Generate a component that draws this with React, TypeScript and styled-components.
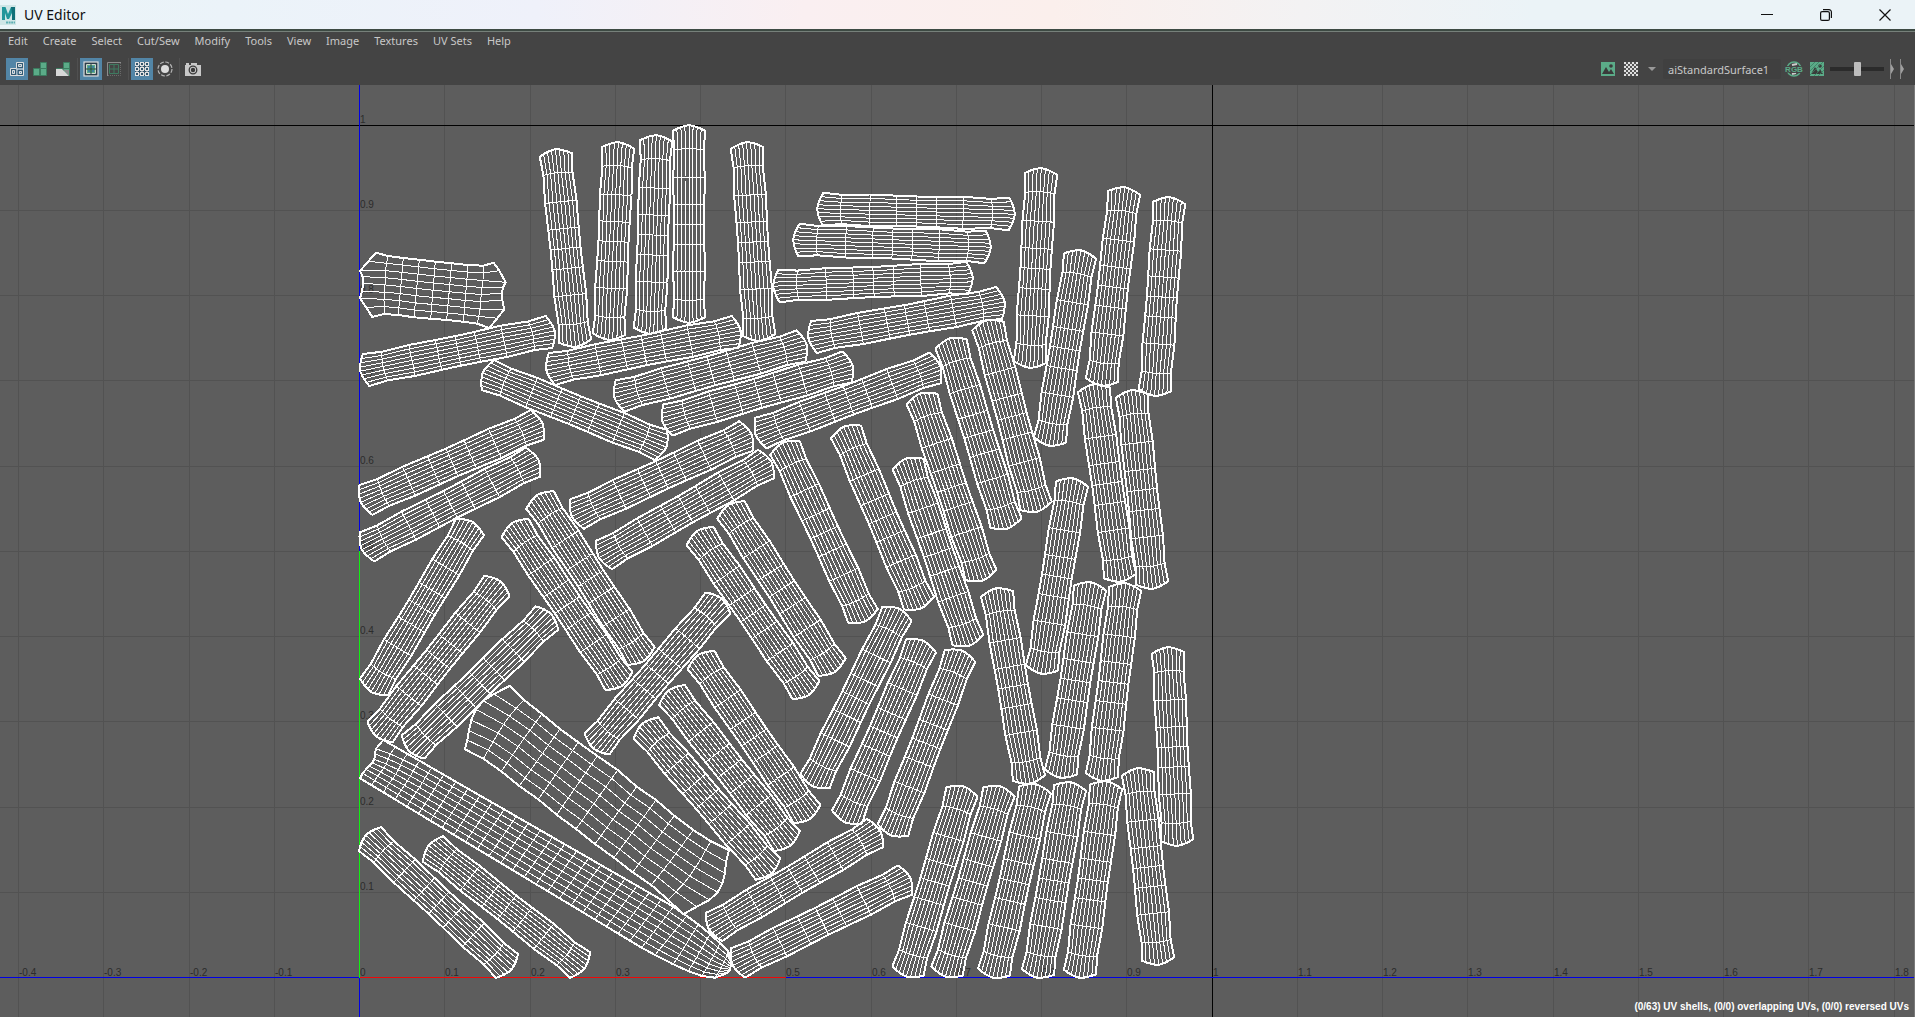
import React from "react";
import styled, { createGlobalStyle } from "styled-components";

type Pt = [number, number];

const GlobalStyle = createGlobalStyle`
  * { box-sizing: border-box; }
  body { margin: 0; background: #5d5d5d; overflow: hidden; }
  button, input { font: inherit; color: inherit; margin: 0; padding: 0; border: 0; background: none; }
`;

const Window = styled.div`
  display: flex;
  flex-direction: column;
  height: 100vh;
  background: #444444;
  color: #c8c8c8;
  font-family: "Noto Sans", "Open Sans", sans-serif;
`;

const TitleBar = styled.header`
  display: flex;
  align-items: center;
  flex: none;
  height: 29px;
  gap: 8px;
  padding-right: 1px;
  color: #111111;
  background: linear-gradient(90deg, #eaf4f7 0%, #ebf3f9 12%, #eff1fa 28%, #faeff1 42%, #fbefec 55%, #f3f2f3 68%, #ebf3f7 80%, #ebf3f7 100%);
`;

const Title = styled.h1`
  flex: 1;
  margin: 0;
  font: 400 14px/28px "Noto Sans", sans-serif;
`;

const WindowButton = styled.button`
  display: grid;
  place-items: center;
  width: 59px;
  height: 28px;
`;

const Rule = styled.div`
  flex: none;
  height: 3px;
  background: #3d4a43;
  border-bottom: 1px solid #76807a;
`;

const MenuBar = styled.nav`
  display: flex;
  flex: none;
  gap: 15px;
  height: 18px;
  padding-left: 8px;
`;

const MenuItem = styled.button`
  font-size: 11px;
  line-height: 18px;
  white-space: nowrap;
`;

const ToolBar = styled.div`
  display: flex;
  flex: none;
  align-items: center;
  justify-content: space-between;
  height: 35px;
  padding: 3px 8px 0 6px;
`;

const ToolGroup = styled.div<{ $gap?: number }>`
  display: flex;
  align-items: center;
  gap: ${(p) => p.$gap ?? 1}px;
`;

const ToolButton = styled.button<{ $on?: boolean; $width?: number }>`
  display: grid;
  place-items: center;
  width: ${(p) => p.$width ?? 22}px;
  height: 22px;
  background: ${(p) => (p.$on ? "#5285a6" : "transparent")};
`;

const Separator = styled.span`
  width: 1px;
  height: 22px;
  margin: 0 1px 0 2px;
  background: #505050;
`;

const TextureName = styled.input`
  width: 118px;
  height: 20px;
  padding-left: 5px;
  font-size: 11px;
  background: #404040;
  border-radius: 2px;
`;

const Slider = styled.input`
  appearance: none;
  width: 54px;
  height: 14px;
  background: linear-gradient(#2b2b2b, #2b2b2b) center / 100% 4px no-repeat;
  &::-webkit-slider-thumb {
    appearance: none;
    width: 7px;
    height: 14px;
    border-radius: 1px;
    background: #bdbdbd;
  }
`;

const Viewport = styled.main`
  position: relative;
  flex: 1;
  min-height: 0;
  overflow: hidden;
  background: #5d5d5d;
  border-right: 1px solid #7a7a7a;
`;

const Canvas = styled.svg`
  display: block;
  width: 100%;
  height: 100%;
`;

const GridLabel = styled.text`
  font: 10px "Liberation Sans", Arial, sans-serif;
  fill: #2c2c2c;
`;

const Status = styled.p`
  position: absolute;
  right: 5px;
  bottom: 2px;
  margin: 0;
  color: #ffffff;
  font: 700 10px/16px "Liberation Sans", Arial, sans-serif;
`;

/* ---- UV space ---- */

const TOP = 85;
const ORIGIN_X = 359;
const ORIGIN_Y = 977 - TOP;
const STEP = 85.25;

/* Centre of each end of a strip shell: x1, y1, x2, y2 in window pixels. */
const STRIPS: number[][] = [
  [556, 155, 575, 341], [618, 148, 609, 334], [656, 141, 650, 328], [689, 131, 689, 317],
  [747, 148, 759, 335], [823, 209, 1009, 214], [799, 240, 985, 247], [779, 286, 967, 278],
  [814, 337, 999, 303], [366, 370, 549, 332], [552, 369, 735, 332], [620, 396, 801, 346],
  [668, 420, 847, 367], [761, 433, 935, 368], [488, 375, 661, 445], [366, 500, 537, 425],
  [367, 547, 533, 462], [577, 514, 746, 436], [604, 555, 766, 464], [470, 527, 374, 687],
  [497, 586, 380, 732], [547, 618, 413, 747], [515, 528, 619, 681], [540, 500, 641, 656],
  [718, 603, 597, 744], [700, 536, 806, 690], [731, 510, 832, 667], [785, 448, 863, 616],
  [846, 432, 919, 603], [908, 464, 968, 640], [922, 399, 981, 575], [951, 344, 1006, 523],
  [988, 326, 1036, 506], [1041, 174, 1030, 362], [1080, 256, 1050, 440], [1124, 193, 1102, 380],
  [1169, 203, 1155, 390], [1094, 390, 1120, 576], [1132, 396, 1152, 583], [1072, 484, 1042, 668],
  [1090, 588, 1061, 772], [1125, 589, 1102, 775], [1168, 653, 1177, 840], [997, 594, 1029, 778],
  [897, 614, 815, 781], [921, 646, 847, 817], [960, 656, 893, 830], [701, 660, 807, 814],
  [672, 695, 787, 841], [646, 728, 768, 869], [714, 927, 875, 833], [738, 963, 905, 880],
  [962, 792, 908, 971], [999, 792, 947, 971], [1035, 790, 994, 972], [1070, 788, 1038, 972],
  [1106, 787, 1080, 972], [1138, 774, 1158, 959], [370, 839, 507, 966], [433, 849, 580, 965],
];

const path = (pts: Pt[]) =>
  "M" + pts.map(([x, y]) => `${x.toFixed(1)} ${(y - TOP).toFixed(1)}`).join("L");

/* Rows of a strip: distance along a strip 187 long, and half width there. */
const ROWS: Pt[] = [
  [0, 16.3], [19, 14.6], [47, 15.8], [74, 15.3], [94, 15], [114, 15.3], [141, 16], [169, 14.6], [187, 16.3],
];
const COLS = 8;

function stripPoints([x1, y1, x2, y2]: number[]): Pt[][] {
  const len = Math.hypot(x2 - x1, y2 - y1);
  const ux = (x2 - x1) / len;
  const uy = (y2 - y1) / len;
  return ROWS.map(([d, half], r) =>
    Array.from({ length: COLS + 1 }, (_, c): Pt => {
      const t = (c / COLS) * 2 - 1;
      const arch = 1 - Math.pow(Math.abs(t), 1.6);
      const bow = r === 0 ? -5.8 * arch : r === 8 ? 5.8 * arch : r === 1 ? -1.5 * arch : r === 7 ? 1.5 * arch : 0;
      const along = (d / 187) * len + bow;
      return [x1 + ux * along + uy * half * t, y1 + uy * along - ux * half * t];
    })
  );
}

const zoomed = (ox: number, oy: number, flat: number[]): Pt[] => {
  const out: Pt[] = [];
  for (let i = 0; i < flat.length; i += 2) out.push([ox + flat[i] / 3, oy + flat[i + 1] / 3]);
  return out;
};

/* Grid between two long sides; the bulge of each end fades quickly towards the middle. */
function patchPoints(top: Pt[], bottom: Pt[], start: Pt[], end: Pt[]): Pt[][] {
  const n = top.length - 1;
  const m = start.length - 1;
  return top.map((a, i) => {
    const b = bottom[i];
    const u = i / n;
    return start.map((_, j): Pt => {
      const v = j / m;
      const axis = (k: 0 | 1) => {
        const s = start[j][k] - (start[0][k] * (1 - v) + start[m][k] * v);
        const e = end[j][k] - (end[0][k] * (1 - v) + end[m][k] * v);
        return a[k] * (1 - v) + b[k] * v + s * Math.pow(1 - u, 18) + e * Math.pow(u, 18);
      };
      return [axis(0), axis(1)];
    });
  });
}

const spread = (keys: [number, Pt][]): Pt[] => {
  const out: Pt[] = [];
  keys.forEach(([i, p], k) => {
    if (k > 0) {
      const [pi, pp] = keys[k - 1];
      for (let s = pi + 1; s < i; s++) {
        const t = (s - pi) / (i - pi);
        out.push([pp[0] + (p[0] - pp[0]) * t, pp[1] + (p[1] - pp[1]) * t]);
      }
    }
    out.push(p);
  });
  return out.map(([x, y]): Pt => [340 + x / 3, 680 + y / 3]);
};

const PATCHES: Pt[][][] = [
  patchPoints(
    zoomed(340, 100, [108, 458, 143, 468, 190, 474, 238, 479, 286, 485, 335, 490, 384, 495, 430, 497, 461, 488]),
    zoomed(340, 100, [97, 651, 133, 642, 175, 645, 222, 652, 272, 656, 320, 660, 370, 665, 412, 671, 448, 684]),
    zoomed(340, 100, [108, 458, 85, 484, 60, 513, 68, 530, 70, 550, 66, 575, 60, 595, 78, 622, 97, 651]),
    zoomed(340, 100, [461, 488, 478, 512, 497, 547, 489, 562, 486, 580, 487, 600, 493, 628, 472, 655, 448, 684])
  ),
  patchPoints(
    zoomed(340, 680, [510, 17, 552, 60, 606, 102, 660, 147, 715, 187, 772, 228, 833, 270, 890, 320, 948, 360, 1003, 407, 1060, 450, 1113, 484, 1167, 511]),
    zoomed(340, 680, [375, 208, 430, 236, 484, 274, 538, 318, 595, 358, 650, 404, 708, 447, 765, 492, 822, 533, 878, 577, 934, 615, 985, 660, 1030, 703]),
    zoomed(340, 680, [510, 17, 462, 42, 430, 62, 408, 88, 394, 120, 387, 152, 382, 180, 375, 208]),
    zoomed(340, 680, [1167, 511, 1158, 545, 1155, 580, 1147, 610, 1133, 637, 1108, 660, 1070, 680, 1030, 703])
  ),
  patchPoints(
    spread([[0, [130, 180]], [24, [1000, 680]], [25, [1040, 708]], [26, [1075, 733]], [27, [1110, 762]], [28, [1140, 790]], [29, [1165, 815]], [30, [1172, 845]]]),
    spread([[0, [60, 295]], [24, [905, 803]], [25, [945, 825]], [26, [1000, 853]], [27, [1045, 873]], [28, [1085, 888]], [29, [1125, 893]], [30, [1160, 880]]]),
    zoomed(340, 680, [130, 180, 108, 206, 105, 222, 103, 238, 97, 248, 88, 258, 78, 268, 68, 280, 60, 295]),
    zoomed(340, 680, [1172, 845, 1173, 850, 1173, 855, 1172, 860, 1171, 864, 1170, 868, 1168, 872, 1165, 876, 1160, 880])
  ),
];

const Shell = ({ grid }: { grid: Pt[][] }) => {
  const n = grid.length - 1;
  const m = grid[0].length - 1;
  const inner = [
    ...grid.slice(1, n).map(path),
    ...Array.from({ length: m - 1 }, (_, j) => path(grid.map((row) => row[j + 1]))),
  ].join("");
  const outline = path([
    ...grid[0],
    ...grid.map((row) => row[m]),
    ...[...grid[n]].reverse(),
    ...grid.map((row) => row[0]).reverse(),
  ]);
  return (
    <g>
      <path d={inner} strokeWidth={1} />
      <path d={outline + "Z"} strokeWidth={2} strokeLinejoin="bevel" />
    </g>
  );
};

const range = (from: number, to: number) => Array.from({ length: to - from + 1 }, (_, i) => from + i);
const ux = (i: number) => Math.round(ORIGIN_X + i * STEP);
const vy = (i: number) => Math.round(ORIGIN_Y - i * STEP);
const label = (i: number) => String(i / 10);

const UVCanvas = () => (
  <Canvas role="img" aria-label="UV shells" shapeRendering="crispEdges">
    <g fill="#525252">
      {range(-4, 18).map((i) => <rect key={i} x={ux(i)} y="0" width="1" height="100%" />)}
      {range(0, 10).map((i) => <rect key={i} x="0" y={vy(i)} width="100%" height="1" />)}
    </g>
    {range(-4, 18).map((i) => <GridLabel key={i} x={ux(i) + 1} y={ORIGIN_Y - 1}>{label(i)}</GridLabel>)}
    {range(1, 10).map((i) => <GridLabel key={i} x={ORIGIN_X + 1} y={vy(i) - 2}>{label(i)}</GridLabel>)}
    <rect x="0" y={vy(10)} width="100%" height="1" fill="#000000" />
    <rect x={ux(10)} y="0" width="1" height="100%" fill="#000000" />
    <rect x={ORIGIN_X} y="0" width="1" height="100%" fill="#0000e4" />
    <rect x="0" y={ORIGIN_Y} width="100%" height="1" fill="#0000e4" />
    <rect x={ORIGIN_X} y={vy(5)} width="1" height={ORIGIN_Y - vy(5) + 1} fill="#12f012" />
    <rect x={ORIGIN_X + 1} y={ORIGIN_Y} width={ux(5) - ORIGIN_X} height="1" fill="#f00808" />
    <g fill="none" stroke="#ffffff">
      {STRIPS.map((s, i) => <Shell key={i} grid={stripPoints(s)} />)}
      {PATCHES.map((g, i) => <Shell key={i} grid={g} />)}
    </g>
  </Canvas>
);

/* ---- icons ---- */

const GREEN = "#5bab88";

const MayaLogo = () => (
  <svg width="16" height="20" viewBox="0 0 16 20" aria-hidden="true">
    <rect width="16" height="20" fill="#cfe6e6" />
    <path d="M2 15V2h3.5L8 9l3-7h4v13h-3V8l-3 6H7L5 8v7z" fill="#20969a" />
    <path d="M11 2h4v13h-3V8z" fill="#0f6f78" />
    <path d="M6 17.500h9" stroke="#5fb0b4" strokeWidth="2" strokeDasharray="2 .6" />
  </svg>
);

const Svg16 = ({ children }: { children: React.ReactNode }) => (
  <svg width="16" height="16" viewBox="0 0 16 16" fill="none" aria-hidden="true">{children}</svg>
);

const shellBlocks = "M8.500 1.500h6v6h-6zM1.500 7.500h6v7h-6zM8.500 7.500h6v7h-6z";

const IconShells = () => (
  <Svg16>
    <path d="M7.500 1.500h7v13h-13v-7h6zM7.500 8h7M8 8v6" stroke="#dddddd" />
    <path d="M9.500 3.500h3v2h-3zM3.500 9.500h2v3h-2zM10.500 10.500h2v2h-2z" stroke="#dddddd" />
    <path d="M2.500 8.500h4v5h-4zM8.500 2.500h5v4h-5zM9 9.500h4.500v4H9z" stroke="#24465c" strokeWidth=".7" />
  </Svg16>
);
const IconShaded = () => (
  <Svg16><path d={shellBlocks} fill={GREEN} stroke="#3c7d60" /></Svg16>
);
const IconDistortion = () => (
  <Svg16>
    <path d={shellBlocks} fill={GREEN} stroke="#3c7d60" />
    <path d="M1 8h6l7 7H1z" fill="#d8d8d8" />
    <path d="M8 8l6 7V9H8z" fill="#8d8d8d" />
  </Svg16>
);
const IconBorders = () => (
  <Svg16>
    <rect x="1" y="1" width="14" height="14" fill="#2c3f4a" />
    <rect x="1" y="1" width="14" height="14" stroke="#dddddd" strokeWidth="1.200" />
    <path d="M3.500 3.500h9v9h-9z" stroke="#d0d8d0" />
    <path d="M4 4h8v8H4z" fill={GREEN} />
    <path d="M8 3v10M3 8h10" stroke="#25423a" />
    <path d="M5 5h2v2H5zM9 5h2v2H9zM5 9h2v2H5zM9 9h2v2H9z" fill="#3f7fa0" />
  </Svg16>
);
const IconSeams = () => (
  <Svg16>
    <path d="M1.500 15V1.500H15" stroke="#8c8c8c" />
    <path d="M14.500 2v12.500H2" stroke="#6a6a6a" strokeDasharray="1 1" />
    <path d="M3.500 3.500h9v9h-9zM8 4v8M4 8h8" stroke="#3f7a60" />
  </Svg16>
);
const IconGrid = () => (
  <Svg16>
    <path d="M1 1h14v14H1z" fill="#33546a" />
    {[1, 6, 11].map((y) =>
      [1, 6, 11].map((x) => (
        <rect key={`${x}-${y}`} x={x + 0.5} y={y + 0.5} width="3" height="3" stroke="#e2e2e2" />
      ))
    )}
    <path d="M5 3h1M10 3h1M5 8h1M10 8h1M5 13h1M10 13h1M3 5v1M8 5v1M13 5v1M3 10v1M8 10v1M13 10v1" stroke="#e2e2e2" />
  </Svg16>
);
const IconIsolate = () => (
  <Svg16>
    <circle cx="8" cy="8" r="4" fill="#dcdcdc" />
    <circle cx="8" cy="8" r="7" stroke="#b4b4b4" strokeWidth="1.200" strokeDasharray="4 1.500" />
  </Svg16>
);
const IconCamera = () => (
  <Svg16>
    <path d="M0 4h16v11H0zM1 2h3v2H1zM6 2h6v2H6z" fill="#c8c8c8" />
    <circle cx="8" cy="9" r="3.800" stroke="#3a3a3a" strokeWidth="1.300" />
    <circle cx="8" cy="9" r="2.200" fill="#3a3a3a" />
  </Svg16>
);
const IconImage = ({ hatch }: { hatch?: boolean }) => (
  <Svg16>
    <path d="M1 1h14v14H1z" fill={GREEN} />
    <path d="M2 13L6 6l3 5 2-3 3 5z" fill="#3a3a3a" />
    <circle cx="11" cy="5" r="1.800" fill="#3a3a3a" />
    {hatch && <path d="M1 6l5-5M1 10l9-9M1 14L14 1M5 15L15 5M9 15l6-6" stroke="#3c7d60" strokeWidth=".8" />}
  </Svg16>
);
const IconChecker = () => (
  <Svg16>
    {range(0, 6).map((r) =>
      range(0, 6).map((c) => (
        <rect key={`${r}${c}`} x={1 + c * 2} y={1 + r * 2} width="2" height="2" fill={(r + c) % 2 ? "#555555" : "#e0e0e0"} />
      ))
    )}
  </Svg16>
);
const RgbText = styled.text`
  font: 700 8px "Liberation Sans", Arial, sans-serif;
`;
const IconRgb = () => (
  <svg width="20" height="16" viewBox="0 0 20 16" fill="none" aria-hidden="true">
    <circle cx="10" cy="8" r="7" stroke={GREEN} strokeWidth="1.500" />
    <path d="M8 4l5-1M8 13l4-1" stroke="#cccccc" strokeWidth="2" />
    <RgbText x="10" y="11" textAnchor="middle" fill={GREEN} stroke="#444444" strokeWidth="2" paintOrder="stroke">RGB</RgbText>
  </svg>
);

const MENUS = ["Edit", "Create", "Select", "Cut/Sew", "Modify", "Tools", "View", "Image", "Textures", "UV Sets", "Help"];

export default function App() {
  return (
    <Window>
      <GlobalStyle />
      <TitleBar>
        <MayaLogo />
        <Title>UV Editor</Title>
        <ToolGroup $gap={0}>
          <WindowButton aria-label="Minimize">
            <svg width="12" height="12"><path d="M0 5.500h12" stroke="#111111" /></svg>
          </WindowButton>
          <WindowButton aria-label="Restore">
            <svg width="12" height="12" fill="none" stroke="#111111" strokeWidth="1.200">
              <rect x=".6" y="2.600" width="8.800" height="8.800" rx="1.500" />
              <path d="M3 .6h6a2.400 2.400 0 0 1 2.400 2.400v6" />
            </svg>
          </WindowButton>
          <WindowButton aria-label="Close">
            <svg width="12" height="12"><path d="M.5 .5l11 11M11.500 .5l-11 11" stroke="#111111" strokeWidth="1.200" /></svg>
          </WindowButton>
        </ToolGroup>
      </TitleBar>
      <Rule />
      <MenuBar>
        {MENUS.map((m) => <MenuItem key={m}>{m}</MenuItem>)}
      </MenuBar>
      <ToolBar>
        <ToolGroup>
          <ToolButton $on aria-label="Wireframe"><IconShells /></ToolButton>
          <ToolButton aria-label="Shaded"><IconShaded /></ToolButton>
          <ToolButton aria-label="Distortion"><IconDistortion /></ToolButton>
          <Separator />
          <ToolButton $on aria-label="Texture borders"><IconBorders /></ToolButton>
          <ToolButton aria-label="Seams"><IconSeams /></ToolButton>
          <Separator />
          <ToolButton $on aria-label="Grid"><IconGrid /></ToolButton>
          <ToolButton aria-label="Isolate"><IconIsolate /></ToolButton>
          <Separator />
          <ToolButton aria-label="UV snapshot"><IconCamera /></ToolButton>
        </ToolGroup>
        <ToolGroup $gap={3}>
          <ToolButton $width={20} aria-label="Display image"><IconImage /></ToolButton>
          <ToolButton $width={20} aria-label="Checker map"><IconChecker /></ToolButton>
          <ToolButton $width={16} aria-label="Texture list">
            <svg width="8" height="4"><path d="M0 0h8L4 4z" fill="#999999" /></svg>
          </ToolButton>
          <TextureName aria-label="Texture" defaultValue="aiStandardSurface1" />
          <ToolButton $width={20} aria-label="RGB channels"><IconRgb /></ToolButton>
          <ToolButton $width={20} aria-label="Dim image"><IconImage hatch /></ToolButton>
          <Slider type="range" aria-label="Dim amount" min={0} max={100} defaultValue={50} />
          <ToolButton $width={20} aria-label="More tools">
            <svg width="16" height="20">
              <path d="M1.500 0v20M11.500 0v20" stroke="#8a8a8a" />
              <path d="M2 5l3 5-3 5zM12 5l3 5-3 5z" fill="#a0a0a0" />
            </svg>
          </ToolButton>
        </ToolGroup>
      </ToolBar>
      <Viewport>
        <UVCanvas />
        <Status>(0/63) UV shells, (0/0) overlapping UVs, (0/0) reversed UVs</Status>
      </Viewport>
    </Window>
  );
}
